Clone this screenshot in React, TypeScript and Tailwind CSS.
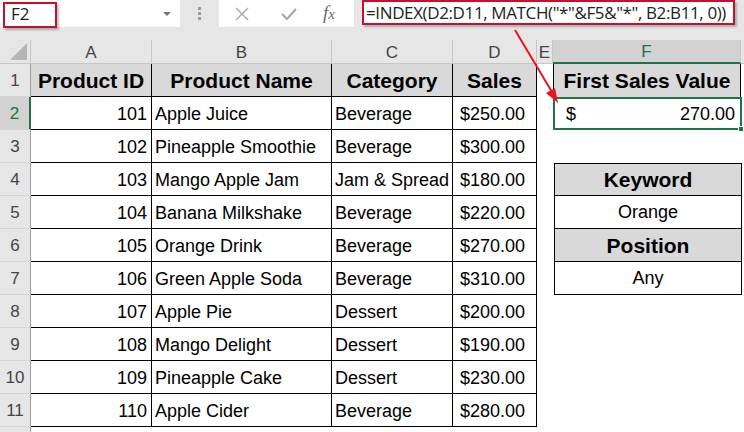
import React from "react";

const rows = [
  ["101", "Apple Juice", "Beverage", "$250.00"],
  ["102", "Pineapple Smoothie", "Beverage", "$300.00"],
  ["103", "Mango Apple Jam", "Jam & Spread", "$180.00"],
  ["104", "Banana Milkshake", "Beverage", "$220.00"],
  ["105", "Orange Drink", "Beverage", "$270.00"],
  ["106", "Green Apple Soda", "Beverage", "$310.00"],
  ["107", "Apple Pie", "Dessert", "$200.00"],
  ["108", "Mango Delight", "Dessert", "$190.00"],
  ["109", "Pineapple Cake", "Dessert", "$230.00"],
  ["110", "Apple Cider", "Beverage", "$280.00"],
];

// right-hand lookup block, by sheet row (4..7)
const side: Record<number, { text: string; head: boolean }> = {
  4: { text: "Keyword", head: true },
  5: { text: "Orange", head: false },
  6: { text: "Position", head: true },
  7: { text: "Any", head: false },
};

function RowHead({ n }: { n?: number }) {
  const active = n === 2;
  return (
    <div
      className={`flex w-[31px] shrink-0 items-end justify-center border-b border-[#d4d4d4] pb-[3px] text-[17px] ${
        active
          ? "border-r-2 border-r-[#217346] bg-[#d2d2d2] text-[#217346]"
          : "border-r border-r-[#9f9f9f] bg-[#e6e6e6] text-[#444]"
      }`}
    >
      {n}
    </div>
  );
}

function Toolbar() {
  return (
    <div className="flex h-[27px] bg-[#e6e6e6]">
      <div className="relative flex w-[180px] items-center bg-white pl-[11px] text-[17px] text-[#222] font-['Open_Sans',sans-serif]">
        <div className="absolute left-[3px] top-[2px] h-[26px] w-[54px] border-2 border-[#c8102e] shadow-[2px_2px_2px_rgba(0,0,0,0.25)]" />
        F2
        <span className="absolute right-[9px] top-[12px] h-0 w-0 border-x-[4px] border-t-[4px] border-x-transparent border-t-[#777]" />
      </div>
      <div className="flex w-[39px] flex-col items-center justify-center gap-[2px]">
        <span className="h-[3px] w-[3px] bg-[#9a9a9a]" />
        <span className="h-[3px] w-[3px] bg-[#9a9a9a]" />
        <span className="h-[3px] w-[3px] bg-[#9a9a9a]" />
      </div>
      <div className="flex w-[135px] items-center bg-white">
        <svg width="14" height="14" viewBox="0 0 14 14" className="ml-[16px]">
          <path d="M1 1L13 13M13 1L1 13" stroke="#a6a6a6" strokeWidth="1.4" />
        </svg>
        <svg width="16" height="14" viewBox="0 0 16 14" className="ml-[32px]">
          <path d="M1 7L6 12L15 2" stroke="#a6a6a6" strokeWidth="2" fill="none" />
        </svg>
        <span className="ml-[26px] font-['Liberation_Serif',serif] text-[19px] italic text-[#6b6b6b]">
          f<span className="text-[15px]">x</span>
        </span>
      </div>
      <div className="w-[8px]" />
      <div className="flex h-[25px] w-[373px] items-center border-2 border-[#c8102e] bg-white pl-[2px] font-['Open_Sans',sans-serif] text-[17px] tracking-[-0.38px] text-[#222] shadow-[2px_2px_2px_rgba(0,0,0,0.25)]">
        =INDEX(D2:D11, MATCH("*"&amp;F5&amp;"*", B2:B11, 0))
      </div>
    </div>
  );
}

function ColumnHeads() {
  const cols = [
    ["A", "w-[121px]"],
    ["B", "w-[180px]"],
    ["C", "w-[121px]"],
    ["D", "w-[84px]"],
    ["E", "w-[16px]"],
  ];
  return (
    <div className="flex h-[24px] text-[17px] text-[#444]">
      <div className="relative w-[31px] shrink-0 border-r border-b border-[#c6c6c6] bg-[#e6e6e6]">
        <svg width="17" height="17" viewBox="0 0 17 17" className="absolute bottom-[3px] right-[3px]">
          <path d="M17 0L17 17L0 17Z" fill="#b5b5b5" />
        </svg>
      </div>
      {cols.map(([c, w]) => (
        <div
          key={c}
          className={`${w} flex shrink-0 items-center justify-center border-r border-b border-[#c6c6c6] bg-[#e6e6e6] pt-[2px]`}
        >
          {c}
        </div>
      ))}
      <div className="flex w-[188px] shrink-0 items-center justify-center border-r border-[#c6c6c6] border-b-2 border-b-[#217346] bg-[#d2d2d2] pt-[2px] text-[#217346]">
        F
      </div>
      <div className="flex-1 border-b border-[#c6c6c6] bg-[#e6e6e6]" />
    </div>
  );
}

function HeaderRow() {
  const heads = [
    ["Product ID", "w-[121px]"],
    ["Product Name", "w-[180px]"],
    ["Category", "w-[121px]"],
    ["Sales", "w-[84px]"],
  ];
  return (
    <div className="flex h-[33px]">
      <RowHead n={1} />
      {heads.map(([h, w]) => (
        <div
          key={h}
          className={`${w} flex shrink-0 items-center justify-center border-r border-b border-black bg-[#d9d9d9] pt-[1px] text-[21px] font-bold text-black`}
        >
          {h}
        </div>
      ))}
      <div className="w-[16px] shrink-0 bg-white" />
      <div className="flex w-[188px] shrink-0 items-center justify-center border-x border-black bg-[#d9d9d9] pt-[1px] text-[21px] font-bold text-black">
        First Sales Value
      </div>
      <div className="flex-1 bg-white" />
    </div>
  );
}

function DataRow({ n, r }: { n: number; r: string[] }) {
  const s = side[n];
  return (
    <div className="flex h-[33px] bg-white text-[18px] text-black">
      <RowHead n={n} />
      <div className="flex w-[121px] shrink-0 items-center justify-end border-r border-b border-black pr-[4px] pt-[2px]">
        {r[0]}
      </div>
      <div className="flex w-[180px] shrink-0 items-center border-r border-b border-black pl-[3px] pt-[2px]">
        {r[1]}
      </div>
      <div className="flex w-[121px] shrink-0 items-center border-r border-b border-black pl-[3px] pt-[2px]">
        {r[2]}
      </div>
      <div className="flex w-[84px] shrink-0 items-center border-r border-b border-black pl-[7px] pt-[2px]">
        {r[3]}
      </div>
      <div className="w-[17px] shrink-0" />
      {n === 2 ? (
        <div className="relative -ml-[1px] flex w-[189px] shrink-0 items-center justify-between border-2 border-[#217346] pl-[11px] pr-[5px] pt-[2px]">
          <span>$</span>
          <span>270.00</span>
          <span className="absolute -bottom-[4px] -right-[4px] h-[6px] w-[6px] border border-white bg-[#217346]" />
        </div>
      ) : s ? (
        <div
          className={`flex w-[188px] shrink-0 items-center justify-center border-x border-b border-black ${
            n === 4 ? "border-t" : ""
          } ${s.head ? "bg-[#d9d9d9] text-[21px] font-bold" : ""} pt-[1px]`}
        >
          {s.text}
        </div>
      ) : (
        <div className="w-[188px] shrink-0" />
      )}
      <div className="flex-1" />
    </div>
  );
}

export default function App() {
  return (
    <div className="relative h-[432px] w-[744px] overflow-hidden bg-[#e6e6e6] font-['Liberation_Sans',Arial,sans-serif]">
      <Toolbar />
      <div className="h-[13px]" />
      <ColumnHeads />
      <HeaderRow />
      {rows.map((r, i) => (
        <DataRow key={i} n={i + 2} r={r} />
      ))}
      <div className="flex h-[10px]">
        <RowHead />
        <div className="flex-1 bg-white" />
      </div>
      <svg
        className="pointer-events-none absolute left-0 top-0"
        width="744"
        height="432"
        viewBox="0 0 744 432"
      >
        <line x1="515" y1="30" x2="552" y2="92" stroke="#e8141e" strokeWidth="2" />
        <path d="M558 103L546 93L555 88Z" fill="#e8141e" />
      </svg>
    </div>
  );
}
